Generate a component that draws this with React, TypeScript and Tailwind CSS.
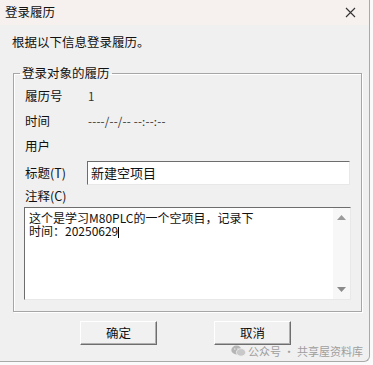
import React from "react";

const font = { fontFamily: '"Noto Sans CJK SC", "Noto Sans", sans-serif' };

const CloseIcon = () => (
  <svg width="11" height="11" viewBox="0 0 11 11" className="text-[#333]">
    <path d="M1 1 L10 10 M10 1 L1 10" stroke="currentColor" strokeWidth="1.1" />
  </svg>
);

const WechatIcon = () => (
  <svg width="15" height="12" viewBox="0 0 15 12">
    <ellipse cx="5.5" cy="5" rx="5.2" ry="4.4" fill="#b5b5b5" />
    <ellipse cx="10" cy="7.4" rx="4.6" ry="3.8" fill="#c8c8c8" stroke="#f0f0f0" strokeWidth="0.8" />
    <circle cx="3.8" cy="4" r="0.7" fill="#f0f0f0" />
    <circle cx="7" cy="4" r="0.7" fill="#f0f0f0" />
  </svg>
);

const Row = ({ label, value }: { label: string; value?: string }) => (
  <div className="flex items-center h-[25px]">
    <span className="w-[74px] pl-[11px] text-[12.5px] text-[#111]">{label}</span>
    {value && <span className="text-[11.5px] text-[#333] tracking-[0.2px]">{value}</span>}
  </div>
);

const Button = ({ text }: { text: string }) => (
  <button className="w-[77px] h-[24px] bg-[#f1f1f1] border border-t-white border-l-white border-r-[#6e6e6e] border-b-[#6e6e6e] shadow-[inset_-1px_-1px_0_#b0b0b0] text-[12.5px] text-[#111] flex items-center justify-center">
    {text}
  </button>
);

export default function App() {
  return (
    <div className="w-[373px] h-[365px] bg-[#fafafa] relative overflow-hidden" style={font}>
      <div className="w-[370px] h-[362px] bg-[#f0f0f0] border-r border-b border-[#a9a9a9] rounded-br-[6px] flex flex-col">
        {/* title bar */}
        <div className="h-[25px] bg-[#f6f0ef] flex items-center justify-between pl-[5px] pr-[13px]">
          <span className="text-[12.5px] text-[#111]">登录履历</span>
          <CloseIcon />
        </div>

        <div className="mt-[9px] pl-[12px] h-[16px] leading-[16px] text-[12.5px] text-[#111]">
          根据以下信息登录履历。
        </div>

        <fieldset className="mt-[15px] ml-[13px] w-[349px] border border-[#a6a6a6] shadow-[inset_1px_1px_0_#ffffff,1px_1px_0_#ffffff] pb-[11px]">
          <legend className="ml-[6px] px-[2px] h-[16px] leading-[16px] text-[12.5px] text-[#111]">
            登录对象的履历
          </legend>
          <div className="mt-[3px]">
            <Row label="履历号" value="1" />
            <Row label="时间" value="----/--/-- --:--:--" />
            <Row label="用户" />
          </div>

          <div className="flex items-center mt-[2px] h-[24px]">
            <span className="w-[73px] pl-[11px] text-[12.5px] text-[#111]">标题(T)</span>
            <div className="w-[263px] h-[24px] bg-white border border-t-[#6d6d6d] border-l-[#6d6d6d] border-r-[#e8e8e8] border-b-[#e8e8e8] flex items-center pl-[3px] text-[13px] text-[#111]">
              新建空项目
            </div>
          </div>

          <div className="h-[19px] flex items-end pl-[11px] text-[12.5px] text-[#111] leading-[16px]">
            注释(C)
          </div>

          <div className="mt-[3px] ml-[10px] w-[327px] h-[93px] bg-white border border-t-[#6d6d6d] border-l-[#6d6d6d] border-r-[#e8e8e8] border-b-[#e8e8e8] flex">
            <div className="flex-1 pl-[4px] pt-[3px] text-[12px] leading-[13px] text-[#111]">
              <div>这个是学习M80PLC的一个空项目，记录下</div>
              <div>
                时间：20250629
                <span className="inline-block w-px h-[11px] bg-black align-middle" />
              </div>
            </div>
            <div className="w-[17px] bg-[#f7f7f7] flex flex-col justify-between items-center py-[7px]">
              <svg width="9" height="5" viewBox="0 0 9 5">
                <path d="M0 5 L4.5 0 L9 5 Z" fill="#9a9a9a" />
              </svg>
              <svg width="9" height="5" viewBox="0 0 9 5">
                <path d="M0 0 L4.5 5 L9 0 Z" fill="#8a8a8a" />
              </svg>
            </div>
          </div>
        </fieldset>

        <div className="mt-[9px] pl-[80px] flex gap-[57px]">
          <Button text="确定" />
          <Button text="取消" />
        </div>
      </div>

      {/* watermark */}
      <div className="absolute left-[231px] top-[344px] flex items-center gap-[2px] text-[11px] leading-[14px] text-[#9f9f9f] whitespace-nowrap">
        <WechatIcon />
        <span>公众号 · 共享屋资料库</span>
      </div>
    </div>
  );
}
